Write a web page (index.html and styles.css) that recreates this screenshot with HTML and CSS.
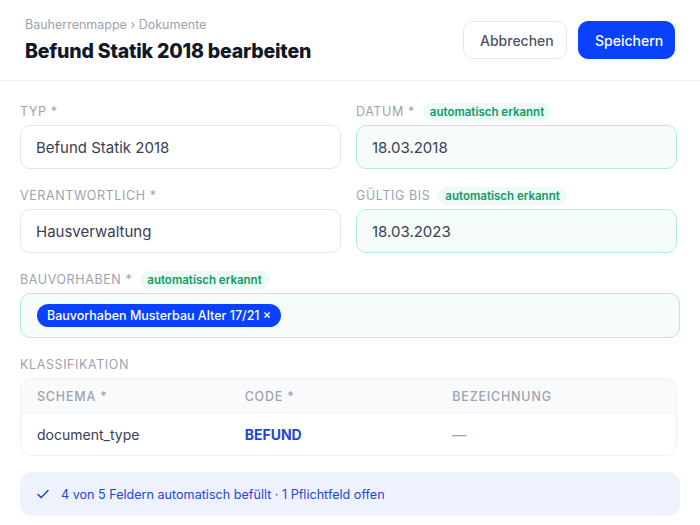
FILE: index.html
```html
<!DOCTYPE html>
<html lang="de">

<head>
    <meta charset="UTF-8">
    <meta name="viewport" content="width=device-width, initial-scale=1.0">
    <title>Befund Statik 2018 bearbeiten</title>
    <link rel="stylesheet" href="styles.css">
</head>

<body>
    <header class="page-header">
        <div class="page-title">
            <div class="breadcrumb">Bauherrenmappe › Dokumente</div>
            <h1>Befund Statik 2018 bearbeiten</h1>
        </div>
        <div class="actions">
            <button type="button" class="btn btn-secondary">Abbrechen</button>
            <button type="submit" class="btn btn-primary">Speichern</button>
        </div>
    </header>

    <form class="doc-form">
        <div class="grid">
            <div class="field">
                <label class="field-label">Typ *</label>
                <div class="input">Befund Statik 2018</div>
            </div>
            <div class="field">
                <label class="field-label">Datum * <span class="auto-badge">automatisch erkannt</span></label>
                <div class="input input-auto">18.03.2018</div>
            </div>
            <div class="field">
                <label class="field-label">Verantwortlich *</label>
                <div class="input">Hausverwaltung</div>
            </div>
            <div class="field">
                <label class="field-label">Gültig bis <span class="auto-badge">automatisch erkannt</span></label>
                <div class="input input-auto">18.03.2023</div>
            </div>
        </div>

        <div class="field">
            <label class="field-label">Bauvorhaben * <span class="auto-badge">automatisch erkannt</span></label>
            <div class="input input-auto input-tags">
                <span class="tag">Bauvorhaben Musterbau Alter 17/21 ×</span>
            </div>
        </div>

        <div class="field">
            <label class="field-label">Klassifikation</label>
            <div class="class-table">
                <div class="row row-head">
                    <span>Schema *</span>
                    <span>Code *</span>
                    <span>Bezeichnung</span>
                </div>
                <div class="row">
                    <span>document_type</span>
                    <span class="code">BEFUND</span>
                    <span class="muted">—</span>
                </div>
            </div>
        </div>

        <div class="summary">
            <svg width="12" height="12" viewBox="0 0 12 12" fill="none">
                <polyline points="1,6.5 4.3,9.6 11,2.6" stroke="currentColor" stroke-width="1.5" stroke-linecap="round" stroke-linejoin="round" />
            </svg>
            <span>4 von 5 Feldern automatisch befüllt · 1 Pflichtfeld offen</span>
        </div>
    </form>
</body>

</html>
```

FILE: styles.css
```css
:root {
    --blue: #0a41ff;
    --blue-text: #1d47d8;
    --text: #111827;
    --text-soft: #374151;
    --muted: #9ca3af;
    --border: #e5e7eb;
    --green-bg: #f5fcf9;
    --green-border: #b3eed6;
    --green-text: #0f9a68;
}

body {
    margin: 0;
    background: #ffffff;
    color: var(--text);
    font-family: Inter, "Noto Sans", sans-serif;
}

.page-header {
    display: flex;
    justify-content: space-between;
    align-items: center;
    padding: 17px 25px 17px;
    border-bottom: 1px solid #f0f1f3;
}

.breadcrumb {
    font-size: 12.5px;
    line-height: 16px;
    color: var(--muted);
}

.page-title h1 {
    margin: 6px 0 0;
    font-size: 19.5px;
    line-height: 24px;
    font-weight: 800;
    letter-spacing: -0.2px;
}

.actions {
    display: flex;
    gap: 11px;
}

.btn {
    height: 38px;
    padding: 0 16px;
    border-radius: 10px;
    font-family: inherit;
    font-size: 14px;
    font-weight: 500;
    cursor: pointer;
}

.btn-secondary {
    background: #ffffff;
    border: 1px solid var(--border);
    color: #4b5563;
    width: 104px;
}

.btn-primary {
    background: var(--blue);
    border: 1px solid var(--blue);
    color: #ffffff;
    width: 97px;
}

.doc-form {
    display: flex;
    flex-direction: column;
    gap: 17px;
    padding: 21px 20px 0;
}

.grid {
    display: grid;
    grid-template-columns: 1fr 1fr;
    column-gap: 15px;
    row-gap: 17px;
    margin-right: 3px;
}

.field {
    display: flex;
    flex-direction: column;
    gap: 4px;
}

.field-label {
    display: flex;
    align-items: center;
    gap: 8px;
    height: 19px;
    font-size: 12.5px;
    letter-spacing: 0.6px;
    text-transform: uppercase;
    color: var(--muted);
}

.auto-badge {
    display: inline-block;
    padding: 2px 7px;
    border-radius: 9px;
    background: #ecfbf4;
    color: var(--green-text);
    font-size: 11.5px;
    font-weight: 600;
    letter-spacing: 0;
    text-transform: none;
    line-height: 14px;
}

.input {
    box-sizing: border-box;
    height: 44px;
    display: flex;
    align-items: center;
    padding: 0 15px;
    border: 1px solid var(--border);
    border-radius: 10px;
    font-size: 15px;
    color: var(--text-soft);
}

.input-auto {
    background: var(--green-bg);
    border-color: var(--green-border);
}

.input-tags {
    height: 45px;
    padding-left: 16px;
}

.tag {
    display: inline-block;
    padding: 4px 10px;
    border-radius: 12px;
    background: var(--blue);
    color: #ffffff;
    font-size: 12.5px;
    font-weight: 500;
    line-height: 15px;
}

.class-table {
    border: 1px solid #f0f1f3;
    border-radius: 12px;
    overflow: hidden;
    margin-right: 3px;
}

.row {
    display: grid;
    grid-template-columns: repeat(3, 1fr);
    align-items: center;
    padding: 0 16px;
    height: 41px;
    font-size: 14px;
    color: var(--text-soft);
}

.row-head {
    height: 34px;
    background: #f9fafb;
    border-bottom: 1px solid #f3f4f6;
    font-size: 12.5px;
    letter-spacing: 0.8px;
    text-transform: uppercase;
    color: var(--muted);
    font-weight: 500;
}

.code {
    color: var(--blue-text);
    font-weight: 700;
}

.muted {
    color: var(--muted);
}

.summary {
    display: flex;
    align-items: center;
    gap: 12px;
    height: 44px;
    margin-top: -1px;
    padding: 0 16px 0 17px;
    background: #eef2fd;
    border-radius: 12px;
    color: var(--blue-text);
    font-size: 12.6px;
}
```
